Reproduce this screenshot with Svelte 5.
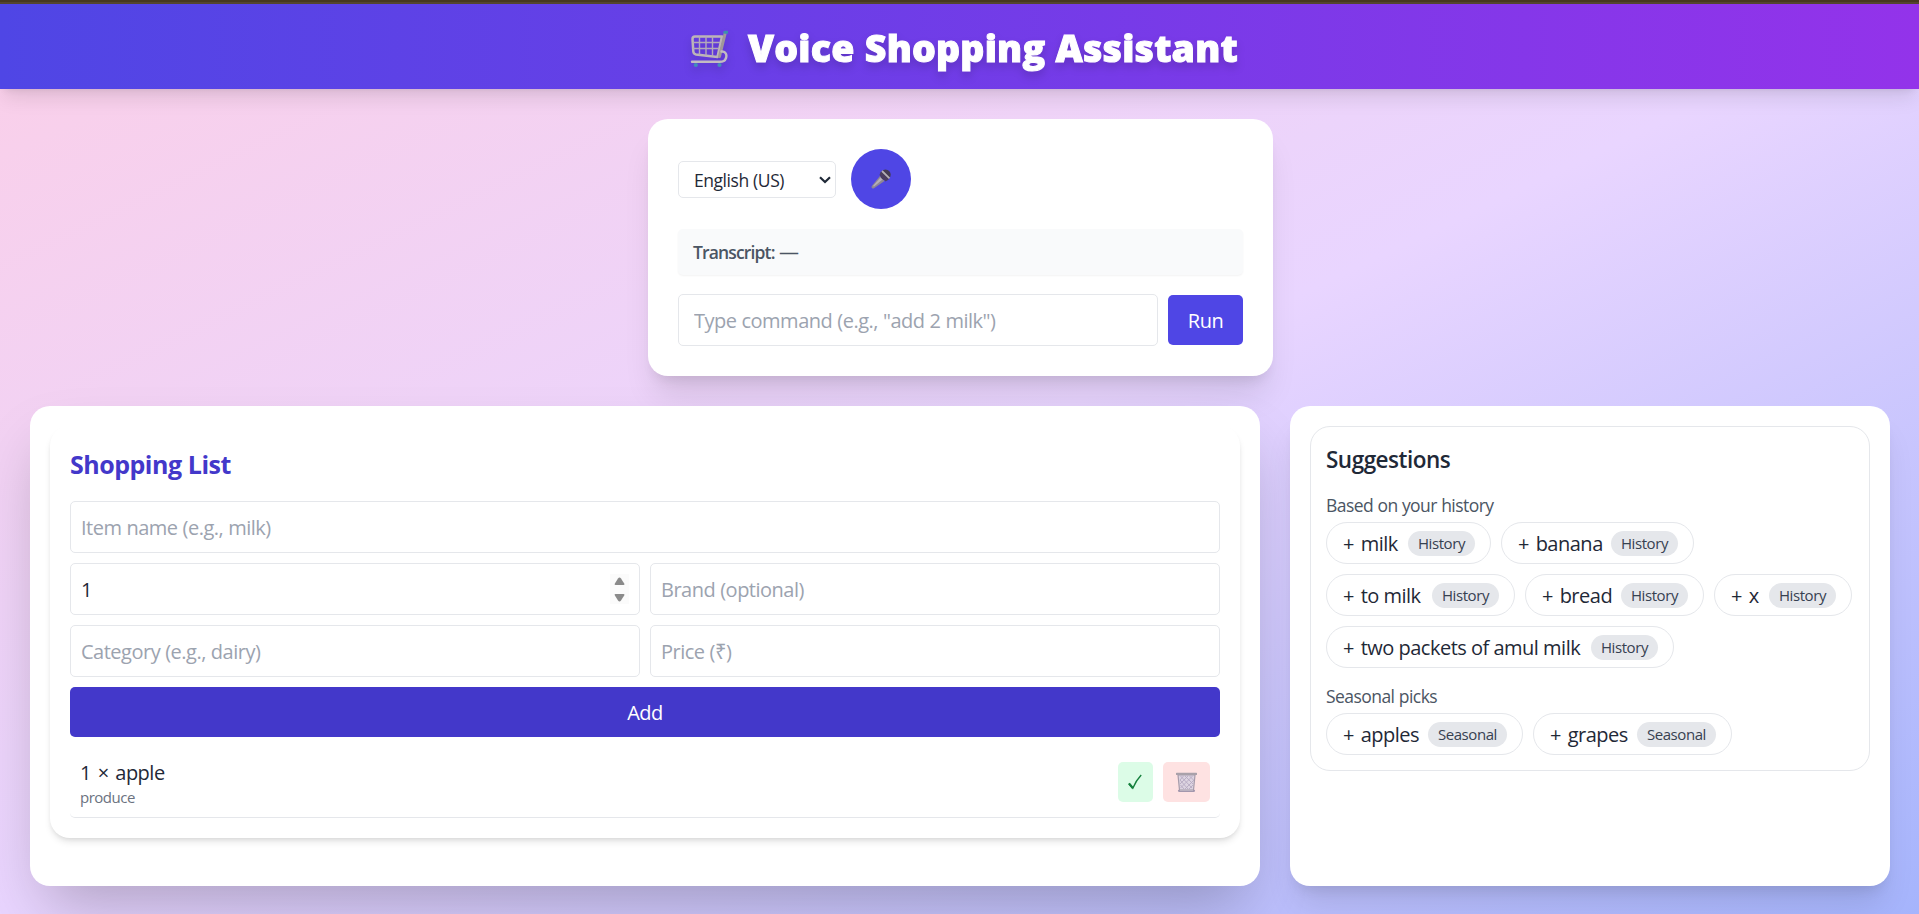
<script>
  const history = [
    { name: 'milk', width: 165 },
    { name: 'banana', width: 193 },
    { name: 'to milk', width: 189 },
    { name: 'bread', width: 179 },
    { name: 'x', width: 138 },
    { name: 'two packets of amul milk', width: 348 }
  ];
  const seasonal = [
    { name: 'apples', width: 197 },
    { name: 'grapes', width: 199 }
  ];
  let quantity = $state(1);
</script>

<div class="page">
  <div class="strip"></div>
  <header>
    <h1>
      <svg class="cart" viewBox="0 0 38 38" width="38" height="38" fill="none" stroke-linecap="round" stroke-linejoin="round">
        <path d="M2.500 9 Q2.500 6.500 5 6.500 H32 L27.500 27 L6 24.500 Q3.500 24 3.300 21.500 Z" stroke="#bdb5b8" stroke-width="2.500" />
        <path d="M9.500 7V24.500M16 7V25M22.500 7V25.500M3.500 12.500H29.500M3.500 18.500H28.500" stroke="#b3a9b8" stroke-width="1.400" />
        <path d="M35 4L29.500 26.500" stroke="#a0979a" stroke-width="3" />
        <path d="M31.500 21.500C36 21 37 25 36 28C35 31 33.500 31.800 29.500 31.800H2" stroke="#c3bbc1" stroke-width="2.400" />
        <path d="M34.800 2.200H37" stroke="#3e8fae" stroke-width="3" />
        <circle cx="5.800" cy="35" r="2.100" fill="#438db8" />
        <circle cx="29.500" cy="35" r="2.100" fill="#438db8" />
      </svg>
      <span>Voice Shopping Assistant</span>
    </h1>
  </header>

  <main>
    <section class="voice card">
      <div class="controls">
        <div class="select">
          <span>English (US)</span>
          <svg width="12" height="8" viewBox="0 0 12 8" fill="none" stroke="#1f2937" stroke-width="2.200"><path d="M1 1.200L6 6L11 1.200" /></svg>
        </div>
        <button class="mic" aria-label="Start listening">
          <svg width="20" height="20" viewBox="0 0 20 20">
            <path d="M9 7L13.500 12L3 19.200Q1.200 20 .6 18.500Q.2 17.800 1 16.800Z" fill="#8f8793" />
            <path d="M9.500 8.500L11.500 10.500L3 17.500L2 17Z" fill="#b7b0b8" />
            <circle cx="14.500" cy="5.800" r="5.200" fill="#443b52" />
            <path d="M9.800 2.800L17.800 10.600L14.500 12.500L8.500 6Z" fill="#4b3d60" />
            <path d="M11 2L18.500 9.300" stroke="#b6afb7" stroke-width="1.800" />
          </svg>
        </button>
      </div>
      <div class="transcript"><b>Transcript:</b> <span class="dash">—</span></div>
      <div class="command">
        <input class="wide" placeholder={'Type command (e.g., "add 2 milk")'} />
        <button class="run">Run</button>
      </div>
    </section>

    <div class="grid">
      <section class="card list-card">
        <div class="list">
          <h2>Shopping List</h2>
          <form onsubmit={(e) => e.preventDefault()}>
            <input class="full" placeholder="Item name (e.g., milk)" />
            <div class="number">
              <input bind:value={quantity} inputmode="numeric" />
              <svg width="19" height="30" viewBox="0 0 19 30">
                <rect width="19" height="30" fill="#fbfbfb" />
                <path d="M4.600 10L8 4.500Q9.500 2.500 11 4.500L14.500 10Q14.500 11 13.500 11H5.500Q4.500 11 4.600 10Z" fill="#8a8a8a" />
                <path d="M4.600 21L8 26.500Q9.500 28.500 11 26.500L14.500 21Q14.500 20 13.500 20H5.500Q4.500 20 4.600 21Z" fill="#8a8a8a" />
              </svg>
            </div>
            <input placeholder="Brand (optional)" />
            <input placeholder="Category (e.g., dairy)" />
            <input placeholder="Price (₹)" />
            <button class="add full">Add</button>
          </form>
          <div class="item">
            <div>
              <div class="item-name">1 × apple</div>
              <div class="item-category">produce</div>
            </div>
            <div class="actions">
              <button class="done" aria-label="Mark done">
                <svg width="14" height="16" viewBox="0 0 14 16" fill="none" stroke="#15803d" stroke-width="1.400"><path d="M.8 9.500L4.800 14.200Q8 6.500 13.200 1" /><path d="M1 9.500L4.800 14" stroke-width="2.200" /></svg>
              </button>
              <button class="remove" aria-label="Remove">
                <svg width="21" height="21" viewBox="0 0 21 21">
                  <path d="M2 3L3.500 18H17.500L19 3Z" fill="#dcd3e0" stroke="#a59baa" stroke-width="1.200" />
                  <path d="M4.500 4L16 16M9 4L17 12M13.500 4L17.500 8M4 8L12 17M4.500 13L8 17M16.500 4L4.500 16M12 4L4 12M7.500 4L4 8M18 8L9 17M17 13L13 17" stroke="#b5a9c2" stroke-width=".9" />
                  <path d="M.8 1.800H20.200" stroke="#a9a1aa" stroke-width="2.200" stroke-linecap="round" />
                  <path d="M3 18.800H18" stroke="#a397ad" stroke-width="2.200" stroke-linecap="round" />
                  <path d="M4 18.200H17" stroke="#cfc9d1" stroke-width=".8" />
                </svg>
              </button>
            </div>
          </div>
        </div>
      </section>

      <section class="card side-card">
        <div class="suggestions">
          <h3>Suggestions</h3>
          <p>Based on your history</p>
          <div class="pills">
            {#each history as s}
              <button class="pill" style:width="{s.width}px"><span class="label"><i>+</i> {s.name}</span><small>History</small></button>
            {/each}
          </div>
          <p>Seasonal picks</p>
          <div class="pills">
            {#each seasonal as s}
              <button class="pill" style:width="{s.width}px"><span class="label"><i>+</i> {s.name}</span><small>Seasonal</small></button>
            {/each}
          </div>
        </div>
      </section>
    </div>
  </main>
</div>

<style>
  :global(body) { margin: 0; overflow: hidden; }
  * { box-sizing: border-box; }
  .page {
    height: 914px;
    overflow: hidden;
    background: linear-gradient(to bottom right, #fbcfe8, #e9d5ff, #a5b4fc);
    font: 20px/30px "Open Sans", "Noto Sans", sans-serif;
    letter-spacing: -0.5px;
    word-spacing: 0.3px;
    color: #1f2937;
  }
  .strip { height: 4px; background: #46381f; border-bottom: 2px solid #54452f; }
  header {
    height: 85px;
    display: flex;
    justify-content: center;
    align-items: center;
    background: linear-gradient(to right, #4f46e5, #9333ea);
    box-shadow: 0 12.5px 19px -4px rgb(0 0 0 / 0.1), 0 5px 7.5px -5px rgb(0 0 0 / 0.1);
  }
  h1 {
    margin: 0 0 0 9px;
    display: flex;
    align-items: center;
    gap: 20px;
    color: #fff;
    font-size: 37.5px;
    line-height: 45px;
    font-weight: 800;
    letter-spacing: 0.2px;
    filter: drop-shadow(0 5px 4px rgb(0 0 0 / 0.15));
  }
  h1 span { white-space: nowrap; padding-top: 2px; -webkit-text-stroke: 1px #fff; }
  .cart { margin-top: 5px; }
  main { padding: 30px 29px 0 30px; }
  .card { background: #fff; border-radius: 20px; }
  .voice {
    width: 625px;
    height: 257px;
    margin-left: 618px;
    padding: 30px;
    box-shadow: 0 25px 31px -6px rgb(0 0 0 / 0.1), 0 10px 12.5px -7.5px rgb(0 0 0 / 0.1);
  }
  .controls { display: flex; align-items: center; gap: 15px; }
  .select {
    width: 158px;
    height: 37px;
    padding: 0 5px 0 15px;
    display: flex;
    align-items: center;
    justify-content: space-between;
    border: 1px solid #e5e7eb;
    border-radius: 5px;
    font-size: 17.5px;
    letter-spacing: -0.45px;
  }
  .select span { padding-top: 2px; }
  .select svg { margin: 1px -1px 0 0; }
  button { border: 0; padding: 0; font: inherit; letter-spacing: inherit; color: inherit; }
  .mic {
    width: 60px;
    height: 60px;
    border-radius: 50%;
    background: #4f46e5;
    display: grid;
    place-items: center;
  }
  .transcript {
    height: 46px;
    margin-top: 20px;
    padding: 0 15px;
    line-height: 46px;
    background: #f9fafb;
    border-radius: 5px;
    box-shadow: 0 1px 2px rgb(0 0 0 / 0.05);
    color: #4b5563;
    font-size: 17.5px;
  }
  .transcript b { font-weight: 600; letter-spacing: -0.85px; }
  .dash { font-size: 20px; line-height: 1; }
  .command { display: flex; align-items: center; gap: 10px; margin-top: 19px; }
  input {
    width: 100%;
    min-width: 0;
    height: 52px;
    padding: 1px 10px;
    border: 1px solid #e5e7eb;
    border-radius: 5px;
    background: #fff;
    font: inherit;
    letter-spacing: inherit;
    word-spacing: inherit;
    color: #1f2937;
    outline: none;
  }
  input::placeholder { color: #9ca3af; opacity: 1; }
  input.wide { flex: 1; padding-left: 15px; }
  .run { width: 75px; height: 50px; padding-top: 2px; border-radius: 5px; background: #4f46e5; color: #fff; }
  .grid {
    display: grid;
    grid-template-columns: 1230px 600px;
    gap: 30px;
    margin-top: 30px;
  }
  .list-card, .side-card { height: 480px; padding: 20px; }
  .list-card { box-shadow: 0 31px 62px -15px rgb(0 0 0 / 0.25); }
  .side-card { box-shadow: 0 25px 31px -6px rgb(0 0 0 / 0.1), 0 10px 12.5px -7.5px rgb(0 0 0 / 0.1); }
  .list {
    height: 412px;
    padding: 20px;
    border-radius: 20px;
    box-shadow: 0 5px 7.5px -1px rgb(0 0 0 / 0.1), 0 2.5px 5px -2.5px rgb(0 0 0 / 0.1);
  }
  h2 { margin: 0 0 19px; padding-top: 1px; font-size: 25px; line-height: 35px; font-weight: 700; color: #4338ca; }
  form { display: grid; grid-template-columns: 1fr 1fr; gap: 10px; }
  .full { grid-column: 1 / -1; }
  .number { position: relative; }
  .number svg { position: absolute; right: 11px; top: 11px; }
  .add { height: 50px; padding-top: 2px; border-radius: 5px; background: #4338ca; color: #fff; }
  .item {
    height: 71px;
    margin-top: 10px;
    padding: 0 10px;
    display: flex;
    justify-content: space-between;
    align-items: center;
    border-bottom: 1px solid #e5e7eb;
    border-radius: 5px;
  }
  .item-name { padding-top: 1px; line-height: 30px; word-spacing: 2px; }
  .item-category { font-size: 15px; line-height: 19px; letter-spacing: -0.5px; color: #6b7280; }
  .actions { display: flex; gap: 10px; }
  .actions button { height: 40px; border-radius: 5px; display: grid; place-items: center; }
  .done { width: 35px; background: #dcfce7; }
  .done svg { margin-right: 2px; }
  .remove { width: 47px; background: #fee2e2; }
  .suggestions { padding: 15px; border: 1px solid #e5e7eb; border-radius: 20px; }
  h3 { margin: 0; padding-top: 1px; font-size: 22.5px; line-height: 34px; font-weight: 600; }
  p { margin: 15px 0 5px; padding-top: 1px; font-size: 17.5px; line-height: 24px; letter-spacing: -0.55px; color: #4b5563; }
  .pills { display: flex; flex-wrap: wrap; gap: 10px; }
  .pill {
    height: 42px;
    padding: 0 15px;
    display: flex;
    align-items: center;
    justify-content: space-between;
    border: 1px solid #e5e7eb;
    border-radius: 21px;
    background: #fff;
    white-space: nowrap;
  }
  .label { padding-top: 2px; }
  .label i { font-style: normal; margin: 0 2px 0 1px; }
  small {
    height: 25px;
    padding: 0 10px;
    border-radius: 13px;
    background: #e5e7eb;
    color: #374151;
    font-size: 15px;
    line-height: 25px;
    letter-spacing: -0.42px;
  }
</style>
